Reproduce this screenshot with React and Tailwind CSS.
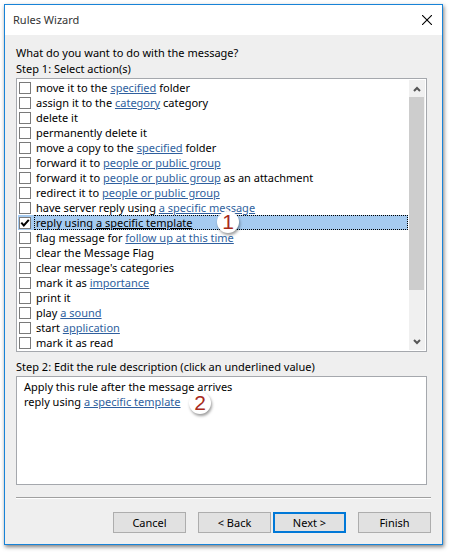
import { useState } from 'react';

const actions = [
  { id: 'move', before: 'move it to the ', link: 'specified', after: ' folder' },
  { id: 'assign', before: 'assign it to the ', link: 'category', after: ' category' },
  { id: 'delete', before: 'delete it' },
  { id: 'permanent', before: 'permanently delete it' },
  { id: 'copy', before: 'move a copy to the ', link: 'specified', after: ' folder' },
  { id: 'forward', before: 'forward it to ', link: 'people or public group' },
  { id: 'attachment', before: 'forward it to ', link: 'people or public group', after: ' as an attachment' },
  { id: 'redirect', before: 'redirect it to ', link: 'people or public group' },
  { id: 'server', before: 'have server reply using ', link: 'a specific message' },
  { id: 'reply', before: 'reply using ', link: 'a specific template', callout: '1' },
  { id: 'flag', before: 'flag message for ', link: 'follow up at this time' },
  { id: 'clearFlag', before: 'clear the Message Flag' },
  { id: 'clearCategories', before: "clear message's categories" },
  { id: 'importance', before: 'mark it as ', link: 'importance' },
  { id: 'print', before: 'print it' },
  { id: 'sound', before: 'play ', link: 'a sound' },
  { id: 'start', before: 'start ', link: 'application' },
  { id: 'read', before: 'mark it as read' }
];

const Callout = ({ children, className }) => (
  <span
    className={`absolute z-10 flex size-[22px] items-center justify-center rounded-full bg-white font-['Liberation_Sans'] text-[21px] leading-[22px] text-[#a82a1c] shadow-[1px_2px_3px_rgba(0,0,0,0.4)] ${className}`}
  >
    {children}
  </span>
);

const ActionRow = ({ action, checked, selected, onToggle }) => (
  <li className={`relative mr-px flex h-[15px] items-start pl-px ${selected ? 'bg-[#a6cbf0]' : ''}`}>
    <span className="relative mt-[2px] size-3 shrink-0">
      <input
        id={action.id}
        type="checkbox"
        checked={checked}
        onChange={onToggle}
        className="block size-3 appearance-none border border-[#7a7a7a] bg-white"
      />
      {checked && (
        <svg viewBox="0 0 12 12" className="pointer-events-none absolute inset-0 size-3" fill="none" stroke="#000" strokeWidth="2">
          <path d="M2.3 5.6 L4.8 8.4 L9.8 2.8" />
        </svg>
      )}
    </span>
    <label
      htmlFor={action.id}
      className={`ml-[3px] h-[15px] grow border pl-px leading-[14px] whitespace-nowrap ${
        selected ? 'border-dotted border-black' : 'border-transparent'
      }`}
    >
      {action.before}
      {action.link && (
        <a href="#" className={`underline underline-offset-1 ${selected ? 'text-black' : 'text-[#2f5f9e]'}`}>
          {action.link}
        </a>
      )}
      {action.after}
    </label>
    {action.callout && <Callout className="-top-1 left-[199px]">{action.callout}</Callout>}
  </li>
);

const ScrollButton = ({ label, path }) => (
  <button type="button" aria-label={label} className="flex h-[17px] w-4 items-center justify-center">
    <svg viewBox="0 0 8 8" className="size-2" fill="none" stroke="#555" strokeWidth="2">
      <path d={path} />
    </svg>
  </button>
);

const WizardButton = ({ children, primary, className = '' }) => (
  <button
    type="button"
    className={`flex h-[21px] w-[73px] items-center justify-center bg-[#e1e1e1] ${
      primary ? 'border-2 border-[#0078d7]' : 'border border-[#adadad]'
    } ${className}`}
  >
    {children}
  </button>
);

const App = () => {
  const [checked, setChecked] = useState({ reply: true });

  const toggle = (id) => setChecked((prev) => ({ ...prev, [id]: !prev[id] }));

  return (
    <div className="bg-white pt-1 pr-1.5 pb-[7px] pl-1 font-['Noto_Sans',sans-serif] text-[11px] leading-4 text-black">
      <main className="border border-[#1883d7] bg-[#efefef] shadow-[1px_2px_4px_rgba(0,0,0,0.5)]">
        <header className="flex h-[30px] items-center justify-between bg-white pr-2.5 pl-2">
          <h1 className="text-[#333]">Rules Wizard</h1>
          <button type="button" aria-label="Close">
            <svg viewBox="0 0 10 10" className="size-2.5" stroke="#000" strokeWidth="1.1">
              <path d="M0 0 L10 10 M10 0 L0 10" />
            </svg>
          </button>
        </header>

        <div className="pt-2.5 pr-[11px] pb-[11px] pl-[11px]">
          <p>What do you want to do with the message?</p>
          <h2>Step 1: Select action(s)</h2>

          <div className="mt-px mr-1 flex border border-[#a5a8ad] bg-white p-px">
            <ul className="min-w-0 grow">
              {actions.map((action) => (
                <ActionRow
                  key={action.id}
                  action={action}
                  checked={!!checked[action.id]}
                  selected={action.id === 'reply'}
                  onToggle={() => toggle(action.id)}
                />
              ))}
            </ul>
            <div className="flex w-4 shrink-0 flex-col bg-[#f0f0f0]">
              <ScrollButton label="Scroll up" path="M1 6 L4 3 L7 6" />
              <div className="grow">
                <div className="h-[193px] w-[15px] bg-[#cdcdcd]" />
              </div>
              <ScrollButton label="Scroll down" path="M1 2 L4 5 L7 2" />
            </div>
          </div>

          <h2 className="mt-[7px]">Step 2: Edit the rule description (click an underlined value)</h2>
          <div className="mt-px mr-1 min-h-[109px] border border-[#a5a8ad] bg-white px-[7px] py-0.5 leading-[15px]">
            <p>Apply this rule after the message arrives</p>
            <p className="relative">
              reply using{' '}
              <a href="#" className="text-[#2f5f9e] underline underline-offset-1">
                a specific template
              </a>
              <Callout className="-top-0.5 left-[165px]">2</Callout>
            </p>
          </div>

          <footer className="mt-3 flex justify-end border-t border-[#a0a0a0] pt-3.5 shadow-[inset_0_1px_0_#fff]">
            <WizardButton>Cancel</WizardButton>
            <WizardButton className="ml-3">&lt; Back</WizardButton>
            <WizardButton primary className="ml-0.5">Next &gt;</WizardButton>
            <WizardButton className="ml-3">Finish</WizardButton>
          </footer>
        </div>
      </main>
    </div>
  );
};

export default App;
